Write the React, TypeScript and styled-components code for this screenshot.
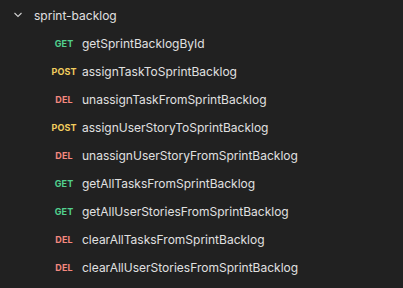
import React from "react";
import styled, { createGlobalStyle } from "styled-components";

const Global = createGlobalStyle`
  html, body { margin: 0; padding: 0; background: #212121; }
  body { font-family: Inter, "Noto Sans", sans-serif; }
`;

const Panel = styled.div`
  width: 403px;
  height: 288px;
  background: #212121;
  display: flex;
  flex-direction: column;
  padding-top: 1px;
  box-sizing: border-box;
`;

const Row = styled.div<{ $indent: number }>`
  height: 28px;
  display: flex;
  align-items: center;
  padding-left: ${(p) => p.$indent}px;
`;

const Chevron = styled.span`
  width: 20px;
  display: flex;
  align-items: center;
  justify-content: center;
  margin-right: 6px;
`;

const FolderName = styled.span`
  color: #e0e0e0;
  font-size: 12px;
`;

const Method = styled.span<{ $color: string }>`
  width: 32px;
  text-align: center;
  font-size: 9px;
  font-weight: 700;
  color: ${(p) => p.$color};
  margin-right: 2px;
  letter-spacing: 0.1px;
`;

const Name = styled.span`
  color: #e0e0e0;
  font-size: 12px;
`;

const COLORS: Record<string, string> = {
  GET: "#52d08e",
  POST: "#f2cd5e",
  DEL: "#f3887f",
};

const items: [string, string][] = [
  ["GET", "getSprintBacklogById"],
  ["POST", "assignTaskToSprintBacklog"],
  ["DEL", "unassignTaskFromSprintBacklog"],
  ["POST", "assignUserStoryToSprintBacklog"],
  ["DEL", "unassignUserStoryFromSprintBacklog"],
  ["GET", "getAllTasksFromSprintBacklog"],
  ["GET", "getAllUserStoriesFromSprintBacklog"],
  ["DEL", "clearAllTasksFromSprintBacklog"],
  ["DEL", "clearAllUserStoriesFromSprintBacklog"],
];

export default function App() {
  return (
    <>
      <Global />
      <Panel>
        <Row $indent={8}>
          <Chevron>
            <svg width="10" height="10" viewBox="0 0 10 10" fill="none">
              <path d="M1.5 3 L5 6.5 L8.5 3" stroke="#d0d0d0" strokeWidth="1.1" />
            </svg>
          </Chevron>
          <FolderName>sprint-backlog</FolderName>
        </Row>
        {items.map(([m, n]) => (
          <Row $indent={48} key={n}>
            <Method $color={COLORS[m]}>{m}</Method>
            <Name>{n}</Name>
          </Row>
        ))}
      </Panel>
    </>
  );
}
